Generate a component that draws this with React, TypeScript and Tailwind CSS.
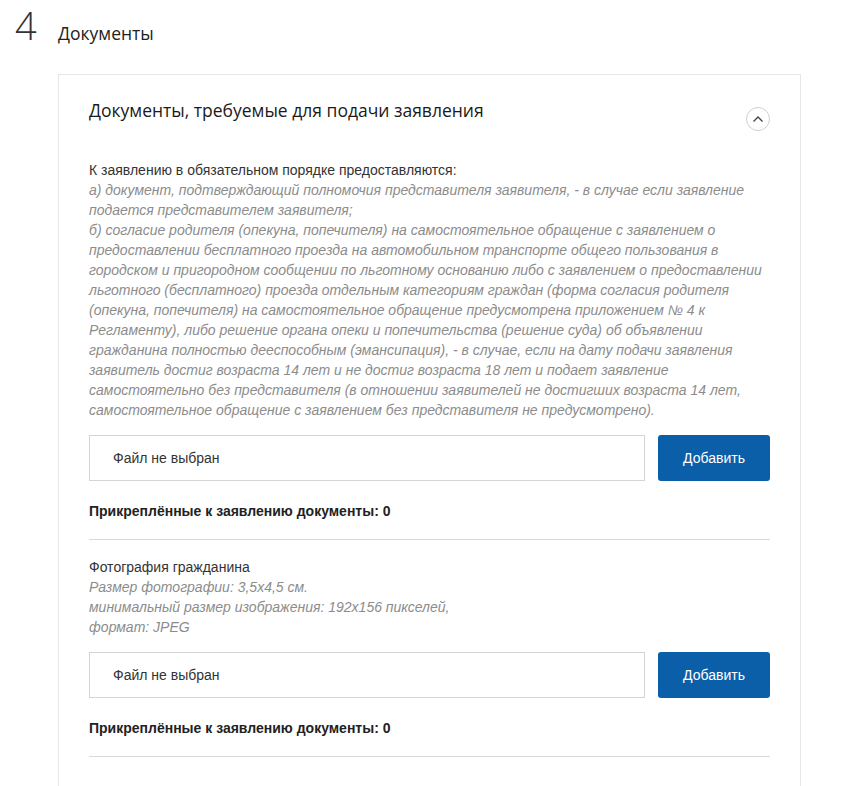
import React from "react";

const bodyLines1 = [
  "а) документ, подтверждающий полномочия представителя заявителя, - в случае если заявление",
  "подается представителем заявителя;",
  "б) согласие родителя (опекуна, попечителя) на самостоятельное обращение с заявлением о",
  "предоставлении бесплатного проезда на автомобильном транспорте общего пользования в",
  "городском и пригородном сообщении по льготному основанию либо с заявлением о предоставлении",
  "льготного (бесплатного) проезда отдельным категориям граждан (форма согласия родителя",
  "(опекуна, попечителя) на самостоятельное обращение предусмотрена приложением № 4 к",
  "Регламенту), либо решение органа опеки и попечительства (решение суда) об объявлении",
  "гражданина полностью дееспособным (эмансипация), - в случае, если на дату подачи заявления",
  "заявитель достиг возраста 14 лет и не достиг возраста 18 лет и подает заявление",
  "самостоятельно без представителя (в отношении заявителей не достигших возраста 14 лет,",
  "самостоятельное обращение с заявлением без представителя не предусмотрено).",
];

const bodyLines2 = [
  "Размер фотографии: 3,5x4,5 см.",
  "минимальный размер изображения: 192x156 пикселей,",
  "формат: JPEG",
];

function FileRow() {
  return (
    <div className="flex gap-[13px]">
      <div className="flex-1 h-[46px] border border-[#d4d4d4] flex items-center pl-[23px] text-[14px] text-[#333]">
        Файл не выбран
      </div>
      <button className="w-[112px] h-[46px] rounded-[3px] bg-[#0b5ea8] text-white text-[14px]">
        Добавить
      </button>
    </div>
  );
}

function Attached() {
  return (
    <div className="mt-[20px] font-bold text-[14px] leading-[20px] text-[#222]">
      Прикреплённые к заявлению документы: 0
    </div>
  );
}

export default function App() {
  return (
    <div
      className="w-[847px] h-[786px] bg-white overflow-hidden"
      style={{ fontFamily: '"Liberation Sans", Arial, sans-serif' }}
    >
      <div className="flex items-baseline pt-[6px] pl-[15px] h-[74px]" style={{ fontFamily: '"Open Sans", sans-serif' }}>
        <span className="text-[38px] leading-[38px] font-light text-[#333] w-[43px]">4</span>
        <span className="text-[17.5px] text-[#222]">Документы</span>
      </div>
      <div className="ml-[58px] w-[743px] border-l border-t border-r border-[#e6e6e6] px-[30px] pt-[23px] h-[800px]">
        <div className="flex justify-between items-start h-[24px]" style={{ fontFamily: '"Open Sans", sans-serif' }}>
          <div className="text-[17.5px] leading-[24px] text-[#1a1a1a]">
            Документы, требуемые для подачи заявления
          </div>
          <div className="mt-[9px] w-[24px] h-[24px] rounded-full border border-[#cfcfcf] flex items-center justify-center">
            <svg width="12" height="8" viewBox="0 0 12 8" fill="none">
              <path d="M1.5 6.5 L6 2 L10.5 6.5" stroke="#444" strokeWidth="1.4" />
            </svg>
          </div>
        </div>
        <div className="mt-[38px] text-[14px] leading-[20px]">
          <div className="text-[#333]">К заявлению в обязательном порядке предоставляются:</div>
          {bodyLines1.map((l, i) => (
            <div key={i} className="italic text-[#8c8c8c] whitespace-nowrap">{l}</div>
          ))}
        </div>
        <div className="mt-[15px]">
          <FileRow />
        </div>
        <Attached />
        <div className="mt-[18px] border-t border-[#d9d9d9]" />
        <div className="mt-[17px] text-[14px] leading-[20px]">
          <div className="text-[#333]">Фотография гражданина</div>
          {bodyLines2.map((l, i) => (
            <div key={i} className="italic text-[#8c8c8c]">{l}</div>
          ))}
        </div>
        <div className="mt-[15px]">
          <FileRow />
        </div>
        <Attached />
        <div className="mt-[18px] border-t border-[#d9d9d9]" />
      </div>
    </div>
  );
}
